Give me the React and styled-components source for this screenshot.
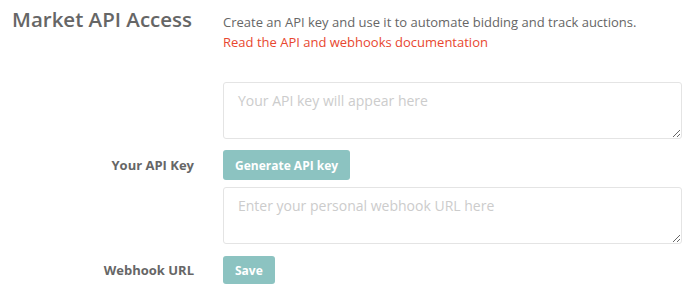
import React from 'react';
import styled, { createGlobalStyle } from 'styled-components';

const GlobalStyle = createGlobalStyle`
  html, body {
    margin: 0;
    padding: 0;
    background: #ffffff;
    font-family: "Open Sans", Lato, sans-serif;
  }
`;

const Page = styled.div`
  padding: 6px 8px 0 11px;
  display: grid;
  grid-template-columns: 183px 459px;
  column-gap: 29px;
  align-items: center;
`;

const Title = styled.h1`
  margin: 0 0 0 1px;
  align-self: start;
  font-size: 20.5px;
  line-height: 26px;
  font-weight: 600;
  color: #666666;
  white-space: nowrap;
`;

const Intro = styled.div`
  padding-top: 6px;
  margin-bottom: 30px;
  font-size: 13px;
  line-height: 20px;
  color: #666666;
`;

const DocLink = styled.a`
  display: block;
  color: #e8472f;
  text-decoration: none;
`;

const Label = styled.div`
  margin-top: ${({ $top }) => $top || 0}px;
  text-align: right;
  font-size: 13px;
  font-weight: 700;
  color: #666666;
`;

const Field = styled.textarea`
  box-sizing: border-box;
  width: 100%;
  height: 57px;
  margin: ${({ $top }) => $top || 0}px 0 0;
  padding: 8px 14px;
  border: 1px solid #e4e4e4;
  border-radius: 3px;
  font-family: "Open Sans", Lato, sans-serif;
  font-size: 14px;
  color: #555555;
  outline: none;

  &::placeholder {
    color: #cccccc;
  }
`;

const Button = styled.button`
  justify-self: start;
  height: ${({ $height }) => $height || 30}px;
  margin: ${({ $top }) => $top || 0}px 0 0;
  padding: 0 12px;
  border: none;
  border-radius: 3px;
  background: #8cc3c1;
  color: #ffffff;
  font-family: "Open Sans", Lato, sans-serif;
  font-size: 12px;
  font-weight: 700;
  cursor: pointer;
`;

const Spacer = styled.div``;

export default function App() {
  return (
    <>
      <GlobalStyle />
      <Page>
        <Title>Market API Access</Title>
        <Intro>
          Create an API key and use it to automate bidding and track auctions.
          <DocLink href="#">Read the API and webhooks documentation</DocLink>
        </Intro>

        <Spacer />
        <Field placeholder="Your API key will appear here" />

        <Label $top={11}>Your API Key</Label>
        <Button $top={11}>Generate API key</Button>

        <Spacer />
        <Field $top={7} placeholder="Enter your personal webhook URL here" />

        <Label $top={12}>Webhook URL</Label>
        <Button $top={12} $height={28}>Save</Button>
      </Page>
    </>
  );
}
